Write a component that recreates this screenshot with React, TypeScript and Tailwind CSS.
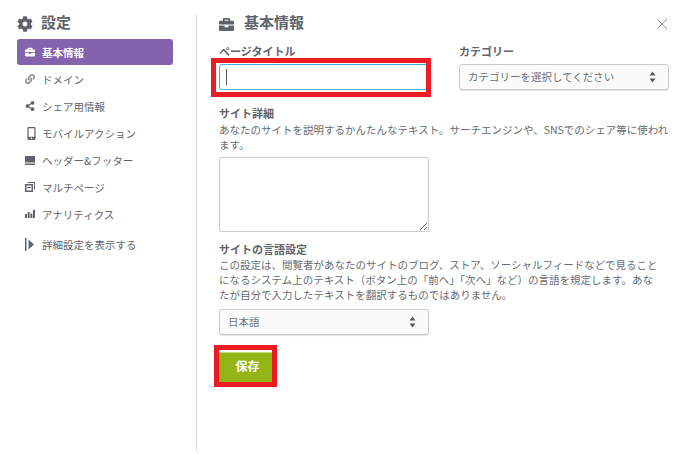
import { X } from 'lucide-react';
import { FaBriefcase, FaCog, FaLink, FaShareAlt, FaMobileAlt } from 'react-icons/fa';
import type { ReactNode } from 'react';

const jp = 'font-["Noto_Sans_CJK_JP","Liberation_Sans",sans-serif]';

function Arrows() {
  return (
    <svg width="7" height="12" viewBox="0 0 7 12" className="fill-[#555c66]">
      <path d="M3.5 0.5 L6.5 4.5 L0.5 4.5 Z" />
      <path d="M3.5 11.5 L6.5 7.5 L0.5 7.5 Z" />
    </svg>
  );
}

function SelectBox({ label, className }: { label: string; className: string }) {
  return (
    <div className={`flex h-[26px] items-center justify-between rounded-[3px] border border-[#c8cacd] bg-[#fbfbfb] pl-2 pr-[12px] text-[10.5px] text-[#6b7078] shadow-[0_1px_1px_rgba(0,0,0,0.12)] ${className}`}>
      <span>{label}</span>
      <Arrows />
    </div>
  );
}

function NavItem({ icon, label, active }: { icon: ReactNode; label: string; active?: boolean }) {
  return (
    <div className={`flex h-[26px] w-[156px] items-center rounded-[3px] pl-2 text-[10.5px] ${active ? 'bg-[#8562ae] font-bold text-white' : 'text-[#5f646c]'}`}>
      <span className="flex w-[17px] shrink-0 items-center">{icon}</span>
      <span className="pt-[2px]">{label}</span>
    </div>
  );
}

export default function App() {
  return (
    <div className={`relative flex h-[454px] w-[688px] overflow-hidden bg-white ${jp}`}>
      {/* sidebar */}
      <div className="w-[196px] shrink-0 pl-[17px] pt-[14px]">
        <div className="mb-[6px] flex h-[19px] items-center gap-[8px] text-[15px] font-bold text-[#5f646c]">
          <FaCog size={16} className="text-[#5f646c]" />
          <span className="-mt-[2px]">設定</span>
        </div>
        <div className="flex flex-col gap-px">
          <NavItem active label="基本情報" icon={<FaBriefcase size={10} />} />
          <NavItem label="ドメイン" icon={<FaLink size={10} className="text-[#8a8e94]" />} />
          <NavItem label="シェア用情報" icon={<FaShareAlt size={10} />} />
          <NavItem label="モバイルアクション" icon={<FaMobileAlt size={13} />} />
          <NavItem
            label="ヘッダー&フッター"
            icon={
              <svg width="10" height="9" viewBox="0 0 10 9" className="fill-[#5f646c]">
                <rect width="10" height="6.5" />
                <rect y="7.5" width="10" height="1.5" />
              </svg>
            }
          />
          <NavItem
            label="マルチページ"
            icon={
              <svg width="10" height="10" viewBox="0 0 10 10" className="fill-[#5f646c]">
                <path d="M2.5 0 H10 V7.5 H9 V1 H2.5 Z" />
                <path d="M0 2 H8 V10 H0 Z M1.5 3.5 V8.5 H6.5 V3.5 Z" fillRule="evenodd" />
                <rect x="2" y="5" width="4" height="1" />
              </svg>
            }
          />
          <NavItem
            label="アナリティクス"
            icon={
              <svg width="10" height="8" viewBox="0 0 10 8" className="fill-[#5f646c]">
                <rect x="0" y="4" width="2" height="4" />
                <rect x="2.7" y="2" width="2" height="6" />
                <rect x="5.4" y="3.5" width="2" height="4.5" />
                <rect x="8" y="0" width="2" height="8" />
              </svg>
            }
          />
          <div className="mt-[3px]">
            <NavItem
              label="詳細設定を表示する"
              icon={
                <svg width="10" height="13" viewBox="0 0 10 13" className="fill-[#5f646c]">
                  <rect x="0" y="0" width="1.5" height="13" />
                  <path d="M3.5 1.5 L9 6.5 L3.5 11.5 Z" />
                </svg>
              }
            />
          </div>
        </div>
      </div>

      {/* main */}
      <div className="mt-[15px] h-[436px] flex-1 border-l border-[#d6d8da] pl-[22px]">
        <div className="flex h-[18px] items-center justify-between pr-[17px]">
          <div className="flex items-center gap-[10px] text-[15px] font-bold text-[#5f646c]">
            <FaBriefcase size={15} className="text-[#5f646c]" />
            <span className="-mt-[4px]">基本情報</span>
          </div>
          <X size={18} strokeWidth={1} className="text-[#5f646c]" />
        </div>

        <div className="mt-[11px] flex gap-[30px]">
          <div className="w-[210px]">
            <div className="mb-[5px] h-[15px] text-[11px] font-bold leading-[15px] text-[#5f646c]">ページタイトル</div>
            <div className="flex h-[26px] items-center rounded-[3px] border border-[#3eaadf] pl-[6px]">
              <span className="h-[16px] w-px bg-[#555]" />
            </div>
          </div>
          <div className="w-[210px]">
            <div className="mb-[5px] h-[15px] text-[11px] font-bold leading-[15px] text-[#5f646c]">カテゴリー</div>
            <SelectBox label="カテゴリーを選択してください" className="w-[210px]" />
          </div>
        </div>

        <div className="mt-[16px] h-[15px] text-[11px] font-bold leading-[15px] text-[#5f646c]">サイト詳細</div>
        <p className="mt-px w-[451px] text-[10.5px] leading-[15px] text-[#666b73]">
          あなたのサイトを説明するかんたんなテキスト。サーチエンジンや、SNSでのシェア等に使われます。
        </p>
        <textarea className="mt-[5px] block h-[75px] w-[210px] rounded-[2px] border border-[#c8cacd] bg-white" />

        <div className="mt-[10px] h-[15px] text-[11px] font-bold leading-[15px] text-[#5f646c]">サイトの言語設定</div>
        <p className="w-[444px] text-[10.5px] leading-[15px] text-[#666b73]">
          この設定は、閲覧者があなたのサイトのブログ、ストア、ソーシャルフィードなどで見ることになるシステム上のテキスト（ボタン上の「前へ」「次へ」など）の言語を規定します。あなたが自分で入力したテキストを翻訳するものではありません。
        </p>
        <SelectBox label="日本語" className="mt-[7px] w-[210px]" />

        <button className="mt-[17px] block h-[30px] w-[54px] border-t border-[#c5d97f] bg-[#94b516] pb-[3px] pl-[3px] text-[12px] font-bold text-white">
          保存
        </button>
      </div>

      {/* red annotation boxes */}
      <div className="absolute left-[211px] top-[58px] h-[39px] w-[220px] border-[5px] border-[#ed1c24]" />
      <div className="absolute left-[214px] top-[345px] h-[42px] w-[63px] border-[5px] border-[#ed1c24]" />
    </div>
  );
}
